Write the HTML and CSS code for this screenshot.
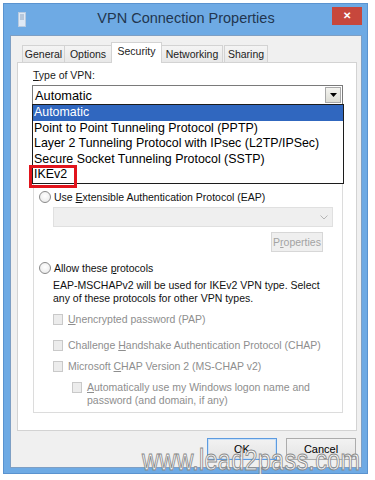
FILE: index.html
```html
<!DOCTYPE html>
<html lang="en">
<head>
    <meta charset="UTF-8">
    <meta name="viewport" content="width=device-width, initial-scale=1.0">
    <title>VPN Connection Properties</title>
    <link rel="stylesheet" href="styles.css">
</head>
<body>
    <div class="window">
        <div class="titlebar">
            <svg class="app-icon" width="8" height="15" viewBox="0 0 8 15">
                <rect x="0.5" y="0.5" width="7" height="14" fill="#dfe9f5" stroke="#b9cbe0"/>
                <line x1="2" y1="3" x2="6" y2="3" stroke="#8ea6c2"/>
                <line x1="2" y1="5" x2="6" y2="5" stroke="#8ea6c2"/>
                <line x1="2" y1="7" x2="6" y2="7" stroke="#8ea6c2"/>
            </svg>
            <div class="title">VPN Connection Properties</div>
            <div class="close">&#x2715;</div>
        </div>

        <div class="client">
            <div class="tabs">
                <div class="tab tab-general">General</div>
                <div class="tab tab-options">Options</div>
                <div class="tab tab-security active">Security</div>
                <div class="tab tab-networking">Networking</div>
                <div class="tab tab-sharing">Sharing</div>
            </div>

            <div class="panel">
                <div class="label"><u>T</u>ype of VPN:</div>

                <div class="combo-wrap">
                    <div class="combo">
                        <span class="combo-value">Automatic</span>
                        <span class="combo-btn">
                            <svg width="7" height="4" viewBox="0 0 7 4"><path d="M0 0h7L3.5 4z" fill="#000"/></svg>
                        </span>
                    </div>
                    <!-- open dropdown list, drawn over the page -->
                    <ul class="droplist">
                        <li class="selected">Automatic</li>
                        <li>Point to Point Tunneling Protocol (PPTP)</li>
                        <li>Layer 2 Tunneling Protocol with IPsec (L2TP/IPSec)</li>
                        <li>Secure Socket Tunneling Protocol (SSTP)</li>
                        <li>IKEv2</li>
                    </ul>
                    <div class="highlight-box"></div>
                </div>

                <div class="group">
                    <div class="option">
                        <span class="radio"></span>
                        <span>Use <u>E</u>xtensible Authentication Protocol (EAP)</span>
                    </div>
                    <div class="eap-combo">
                        <svg width="8" height="5" viewBox="0 0 8 5"><path d="M0.5 0.5L4 4L7.5 0.5" fill="none" stroke="#b5b5b5"/></svg>
                    </div>
                    <div class="props-btn">P<u>r</u>operties</div>

                    <div class="option allow">
                        <span class="radio"></span>
                        <span>Allow these <u>p</u>rotocols</span>
                    </div>
                    <div class="note">
                        EAP-MSCHAPv2 will be used for IKEv2 VPN type. Select<br>
                        any of these protocols for other VPN types.
                    </div>

                    <div class="check pap">
                        <span class="box"></span>
                        <span><u>U</u>nencrypted password (PAP)</span>
                    </div>
                    <div class="check chap">
                        <span class="box"></span>
                        <span>Challenge <u>H</u>andshake Authentication Protocol (CHAP)</span>
                    </div>
                    <div class="check mschap">
                        <span class="box"></span>
                        <span>Microsoft <u>C</u>HAP Version 2 (MS-CHAP v2)</span>
                    </div>
                    <div class="check auto">
                        <span class="box"></span>
                        <span><u>A</u>utomatically use my Windows logon name and<br>password (and domain, if any)</span>
                    </div>
                </div>
            </div>

            <div class="buttons">
                <div class="btn default">OK</div>
                <div class="btn">Cancel</div>
            </div>
        </div>

        <div class="watermark">www.lead2pass.com</div>
    </div>
</body>
</html>
```

FILE: styles.css
```css
body {
    margin: 0;
    background: #fff;
    font-family: "Liberation Sans", Arial, sans-serif;
    font-size: 10.5px;
    color: #000;
}

u {
    text-decoration: underline;
    text-underline-offset: 1px;
}

.window {
    position: relative;
    margin: 3px 0 0 3px;
    width: 365px;
    height: 471px;
    box-sizing: border-box;
    padding: 0 5px 5px 6px;
    background: #6eaae4;
    border: 1px solid #5a93cf;
    display: flex;
    flex-direction: column;
}

/* title bar */
.titlebar {
    height: 31px;
    display: flex;
    align-items: center;
    position: relative;
}

.app-icon {
    margin-left: 8px;
}

.title {
    position: absolute;
    left: 0;
    right: 0;
    top: 6px;
    text-align: center;
    font-size: 14.5px;
    color: #22364f;
}

.close {
    position: absolute;
    right: 0;
    top: 3px;
    width: 30px;
    height: 18px;
    background: #c7473c;
    color: #fff;
    font-size: 10px;
    font-weight: bold;
    text-align: center;
    line-height: 18px;
}

/* client area */
.client {
    flex: 1;
    background: #f0f0f0;
    border: 1px solid #7e9fc4;
    padding: 6px 4px 0 6px;
    display: flex;
    flex-direction: column;
}

.tabs {
    height: 20px;
    display: flex;
    align-items: flex-end;
    padding-left: 5px;
    position: relative;
    z-index: 2;
}

.tab {
    height: 17px;
    box-sizing: border-box;
    border: 1px solid #d3d3d3;
    border-bottom: none;
    margin-right: -1px;
    background: linear-gradient(#f4f4f4, #e8e8e8);
    text-align: center;
    line-height: 16px;
    color: #222;
}

.tab-general { width: 43px; }
.tab-options { width: 48px; }
.tab-security { width: 51px; }
.tab-networking { width: 62px; }
.tab-sharing { width: 44px; margin-left: 2px; }

.tab.active {
    height: 21px;
    margin-bottom: -1px;
    background: #fff;
    line-height: 16px;
}

.panel {
    height: 369px;
    box-sizing: border-box;
    background: #fff;
    border: 1px solid #d3d3d3;
    padding: 0 13px 0 14px;
    display: flex;
    flex-direction: column;
}

.label {
    margin-top: 5px;
    height: 14px;
    line-height: 14px;
    padding-left: 1px;
    color: #1a1a1a;
}

.combo-wrap {
    position: relative;
    margin-top: 3px;
}

.combo {
    height: 20px;
    box-sizing: border-box;
    border: 1px solid #7a7a7a;
    background: #fff;
    display: flex;
    align-items: center;
    font-size: 12.8px;
    padding-left: 2px;
}

.combo-value {
    flex: 1;
}

.combo-btn {
    width: 16px;
    height: 16px;
    margin-right: 1px;
    box-sizing: border-box;
    border: 1px solid #a8a8a8;
    background: linear-gradient(#f4f4f0, #dcdcd4);
    display: flex;
    align-items: center;
    justify-content: center;
}

.droplist {
    position: absolute;
    top: 19px;
    left: 0;
    right: -1px;
    margin: 0;
    padding: 0;
    list-style: none;
    background: #fff;
    border: 1px solid #1c1c1c;
    font-size: 12.4px;
    z-index: 5;
}

.droplist li {
    height: 15.6px;
    line-height: 15.6px;
    padding-left: 1px;
    white-space: nowrap;
}

.droplist li.selected {
    background: #3067bf;
    color: #fff;
}

.highlight-box {
    position: absolute;
    left: -3px;
    top: 80px;
    width: 48px;
    height: 23px;
    box-sizing: border-box;
    border: 3px solid #e1141c;
    z-index: 6;
}

/* authentication group */
.group {
    margin-top: 45px;
    margin-left: 1px;
    height: 263px;
    box-sizing: border-box;
    border: 1px solid #dcdcdc;
    padding: 38px 0 0 5px;
    display: flex;
    flex-direction: column;
}

.option {
    height: 16px;
    display: flex;
    align-items: center;
    gap: 3px;
    color: #111;
}

.radio {
    width: 12px;
    height: 12px;
    box-sizing: border-box;
    border: 1px solid #8a8a8a;
    border-radius: 50%;
    background: radial-gradient(circle at 50% 40%, #fff, #e6e6e6);
}

.eap-combo {
    margin: 2px 9px 0 14px;
    height: 20px;
    box-sizing: border-box;
    background: #efefef;
    border: 1px solid #e0e0e0;
    display: flex;
    align-items: center;
    justify-content: flex-end;
    padding-right: 4px;
}

.props-btn {
    align-self: flex-end;
    margin: 5px 19px 0 0;
    width: 52px;
    height: 20px;
    box-sizing: border-box;
    background: #efefef;
    border: 1px solid #d7d7d7;
    color: #a3a3a3;
    text-align: center;
    line-height: 18px;
}

.option.allow {
    margin-top: 8px;
}

.note {
    margin: 3px 0 0 14px;
    line-height: 13px;
    color: #111;
}

.check {
    display: flex;
    align-items: center;
    gap: 5px;
    height: 16px;
    margin-left: 14px;
    color: #8e8e8e;
}

.box {
    width: 10px;
    height: 11px;
    box-sizing: border-box;
    border: 1px solid #c9c9c9;
    background: #ececec;
    flex: none;
}

.check.pap { margin-top: 6px; }
.check.chap { margin-top: 10px; }
.check.mschap { margin-top: 5px; }

.check.auto {
    margin: 7px 0 0 33px;
    height: auto;
    align-items: flex-start;
    line-height: 13px;
}

.check.auto .box {
    margin-top: 1px;
}

/* dialog buttons */
.buttons {
    margin-top: 7px;
    display: flex;
    justify-content: flex-end;
    gap: 9px;
    padding-right: 1px;
}

.btn {
    width: 70px;
    height: 22px;
    box-sizing: border-box;
    border: 1px solid #acacac;
    background: linear-gradient(#f2f2f2, #e4e4e4);
    text-align: center;
    line-height: 20px;
    font-size: 11px;
}

.btn.default {
    border-color: #5d9be0;
    box-shadow: inset 0 0 0 1px #c9e0f7;
}

/* watermark over the bottom edge */
.watermark {
    position: absolute;
    left: 138px;
    top: 440px;
    font-size: 29px;
    letter-spacing: 0.3px;
    color: rgba(255, 255, 255, 0.85);
    -webkit-text-stroke: 1px #8a8a8a;
    transform: scaleX(0.81);
    transform-origin: left top;
    white-space: nowrap;
    z-index: 10;
}
```
